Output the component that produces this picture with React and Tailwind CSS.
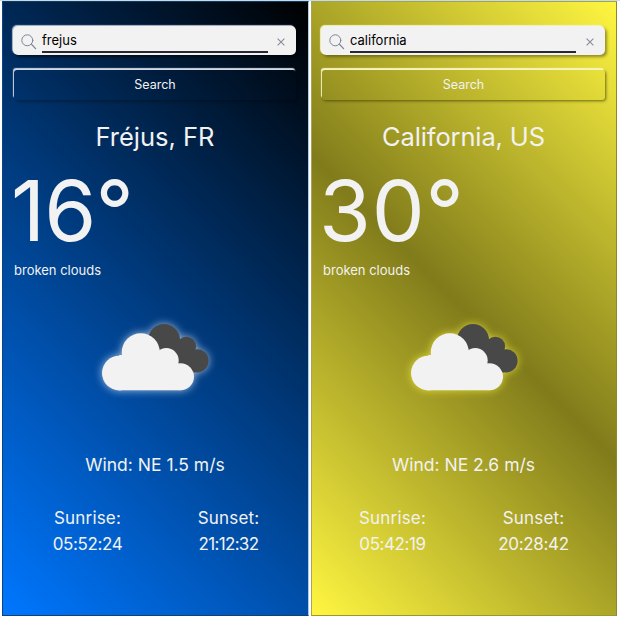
function Clouds({ glow }) {
  return (
    <svg width="130" height="90" viewBox="90 310 130 90" className={`block overflow-visible ${glow}`}>
      <g fill="#484848">
        <circle cx="164" cy="340" r="16" />
        <circle cx="186.3" cy="346.5" r="9.8" />
        <circle cx="197" cy="360.8" r="11.6" />
        <path d="M160 340H180L195 352V372.4H170Z" />
      </g>
      <g fill="#f2f2f2">
        <circle cx="119.3" cy="373.1" r="17.3" />
        <circle cx="140.8" cy="352.3" r="19" />
        <circle cx="166.3" cy="360.5" r="12.4" />
        <circle cx="180.5" cy="376.8" r="13.5" />
        <path d="M119.3 355H170L180.5 366V390.3H119.3Z" />
      </g>
    </svg>
  );
}

function SearchForm({ query, formPadding, buttonShadow, inputShadow }) {
  return (
    <form className={`flex flex-col gap-[13px] pt-6 ${formPadding}`}>
      <div className={`flex h-[29px] items-center rounded-[5px] bg-[#f2f2f2] pl-2 pr-[11px] ${inputShadow}`}>
        <svg width="16" height="16" viewBox="0 0 16 16" fill="none" stroke="#7c8496" strokeWidth="1" strokeLinecap="round" className="mt-0.5 shrink-0">
          <circle cx="6.3" cy="6.3" r="5.5" />
          <path d="M10.6 10.4L14.6 14.6" strokeWidth="1.3" />
        </svg>
        <div className="ml-[5px] h-[25px] w-[226px] border-b-2 border-[#2b2730] pt-[3px] text-[13px] leading-[18px] text-black">
          {query}
        </div>
        <svg width="8" height="8" viewBox="0 0 8 8" stroke="#858b99" strokeWidth="1.1" className="ml-auto mt-0.5">
          <path d="M0.6 0.6L7.4 7.4M7.4 0.6L0.6 7.4" />
        </svg>
      </div>
      <div className={`ml-px mt-[2px] flex h-[30px] items-center justify-center rounded-[3px] text-[12.5px] leading-none text-[#f2f2f2] ${buttonShadow}`}>
        Search
      </div>
    </form>
  );
}

function SunTime({ label, time, tracking, className }) {
  return (
    <div className={`flex flex-col items-center whitespace-nowrap ${className}`}>
      <span className="tracking-[0.01em]">{label}</span>
      <span className={tracking}>{time}</span>
    </div>
  );
}

function WeatherCard({ data }) {
  return (
    <section className={`flex h-[615px] shrink-0 flex-col border font-['Inter',sans-serif] text-[#f2f2f2] ${data.card}`}>
      <SearchForm {...data} />
      <h1 className={`mt-[21px] pr-px text-center text-[25.5px] leading-8 ${data.cityTracking}`}>{data.city}</h1>
      <p className={`mt-4 h-[84px] text-[84px] leading-[84px] ${data.tempTracking}`}>{data.temp}</p>
      <p className="mt-[7px] pl-[11px] text-[13px] leading-5">{data.description}</p>
      <div className="mt-[30px] pl-[87px]">
        <Clouds glow={data.glow} />
      </div>
      <p className="mt-[53px] pr-px text-center text-[17.5px] leading-6">{data.wind}</p>
      <div className="mt-7 flex text-[17px] leading-[26px]">
        <SunTime label="Sunrise:" time={data.sunrise} tracking={data.sunriseTracking} className={data.sunriseBox} />
        <SunTime label="Sunset:" time={data.sunset} tracking={data.sunsetTracking} className="w-[141px]" />
      </div>
    </section>
  );
}

const cards = [
  {
    query: "frejus",
    city: "Fréjus, FR",
    temp: "16°",
    description: "broken clouds",
    wind: "Wind: NE 1.5 m/s",
    sunrise: "05:52:24",
    sunset: "21:12:32",
    formPadding: "pl-[10px] pr-3",
    cityTracking: "",
    tempTracking: "pl-[8px] tracking-[-0.01em]",
    sunriseTracking: "tracking-[-0.022em]",
    sunsetTracking: "tracking-[-0.04em]",
    sunriseBox: "ml-[14px] w-[141px]",
    card: "w-[307px] bg-[linear-gradient(45deg,#0077ff,#000000)] border-t-[#16385e] border-l-[#0c4383] border-r-[#a9cbed] border-b-[#173f70]",
    glow: "drop-shadow-[0_0_4px_rgba(235,245,255,0.7)]",
    inputShadow: "shadow-[-1px_-1px_1px_#b4bfd0,2px_2px_3px_rgba(0,0,0,0.6)]",
    buttonShadow: "shadow-[-1px_-2px_1px_#d3d9e4,2px_2px_3px_rgba(0,0,0,0.25)]",
  },
  {
    query: "california",
    city: "California, US",
    temp: "30°",
    description: "broken clouds",
    wind: "Wind: NE 2.6 m/s",
    sunrise: "05:42:19",
    sunset: "20:28:42",
    formPadding: "pl-[9px] pr-[11px]",
    cityTracking: "tracking-[-0.005em]",
    tempTracking: "pl-[7px] tracking-[0.01em]",
    sunriseTracking: "tracking-[-0.025em]",
    sunsetTracking: "tracking-[-0.02em]",
    sunriseBox: "ml-[10px] w-[141px]",
    card: "w-[306px] bg-[linear-gradient(45deg,#fff641,#817c1b,#fff641)] border-t-[#a9a344] border-l-[#aaa552] border-r-[#8d882c] border-b-[#9c9630]",
    glow: "drop-shadow-[0_0_4px_rgba(255,250,65,0.7)]",
    inputShadow: "shadow-[-1px_-1px_1px_#f6f3bc,2px_2px_3px_rgba(60,56,0,0.5)]",
    buttonShadow: "shadow-[-1px_-2px_1px_#f8f6c0,1px_1px_3px_rgba(60,56,0,0.7)]",
  },
];

export default function App() {
  return (
    <main className="flex h-[620px] w-[620px] gap-[2px] overflow-hidden border-t border-[#c3dcea] bg-white pl-[2px]">
      {cards.map((data) => (
        <WeatherCard key={data.query} data={data} />
      ))}
    </main>
  );
}
